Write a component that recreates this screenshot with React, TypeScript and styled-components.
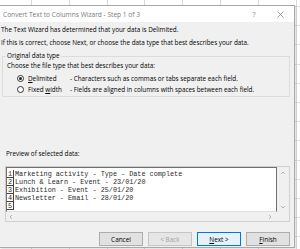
import React, { FC } from "react";
import styled, { createGlobalStyle } from "styled-components";

const GlobalStyle = createGlobalStyle`
  html, body { margin: 0; padding: 0; }
  body { font-family: "Open Sans", "Noto Sans", sans-serif; }
`;

const Screen = styled.div`
  width: 300px;
  height: 249px;
  overflow: hidden;
  background-color: #fff;
  background-image:
    repeating-linear-gradient(90deg, transparent 0 31px, #d9d9d9 31px 32px, transparent 32px 37.8px),
    repeating-linear-gradient(180deg, transparent 0 6px, #dedede 6px 7px, transparent 7px 19.2px);
  padding-top: 5px;
  box-sizing: border-box;
`;

const Dialog = styled.div`
  width: 295px;
  height: 243px;
  box-sizing: border-box;
  background: #f0f0f0;
  border: 1px solid #a9a9a9;
  border-left: none;
  display: flex;
  flex-direction: column;
  box-shadow: 1px 1px 2px rgba(0, 0, 0, 0.15);
`;

const TitleBar = styled.div`
  height: 16px;
  background: #fff;
  display: flex;
  align-items: center;
  padding: 0 1px 0 3px;
  font-size: 6.6px;
  color: #7a7a7a;
`;

const Title = styled.div`
  flex: 1;
`;

const TitleButton = styled.div`
  width: 26px;
  display: flex;
  justify-content: center;
  align-items: center;
  color: #8a8a8a;
  font-size: 7px;
`;

const Body = styled.div`
  flex: 1;
  display: flex;
  flex-direction: column;
  padding: 0 4px 0 1px;
  font-size: 6.35px;
  color: #000;
`;

const Line = styled.div<{ $top?: number; $indent?: number }>`
  height: 10px;
  line-height: 10px;
  margin-top: ${(p) => p.$top ?? 0}px;
  padding-left: ${(p) => p.$indent ?? 0}px;
  white-space: nowrap;
`;

const GroupBox = styled.fieldset`
  margin: 3px 0 0 1px;
  padding: 0 0 1px 4px;
  border: 1px solid #dcdcdc;
  border-radius: 0;
  min-width: 0;
`;

const Legend = styled.legend`
  padding: 0 1px;
  margin-left: -1px;
  line-height: 10px;
  height: 10px;
`;

const RadioRow = styled.label<{ $top?: number }>`
  display: flex;
  align-items: center;
  height: 11px;
  margin-top: ${(p) => p.$top ?? 0}px;
  white-space: nowrap;
`;

const Radio = styled.span<{ $checked?: boolean }>`
  width: 7px;
  height: 7px;
  box-sizing: border-box;
  border-radius: 50%;
  border: 1px solid #333;
  background: #fff;
  margin: 0 4px 0 10px;
  display: flex;
  align-items: center;
  justify-content: center;
  &::after {
    content: "";
    width: 3px;
    height: 3px;
    border-radius: 50%;
    background: ${(p) => (p.$checked ? "#222" : "transparent")};
  }
`;

const RadioLabel = styled.span`
  width: 42px;
  u { text-decoration: underline; }
`;

const PreviewFrame = styled.div`
  margin: 7px 0 0 4px;
  height: 56px;
  box-sizing: border-box;
  border: 1px solid #d0d0d0;
  display: grid;
  grid-template-columns: 1fr 12px;
  grid-template-rows: 1fr 9px;
`;

const TextArea = styled.div`
  background: #fff;
  border-top: 1px solid #6e6e6e;
  border-left: 1px solid #6e6e6e;
  border-right: 1px solid #6e6e6e;
  border-bottom: 1px solid #e0e0e0;
  overflow: hidden;
  padding-top: 2px;
  font-family: "Liberation Mono", monospace;
  font-size: 6.8px;
  color: #2b2b2b;
`;

const PreviewRow = styled.div`
  display: flex;
  height: 8px;
  line-height: 8px;
  white-space: nowrap;
`;

const RowNum = styled.span`
  width: 7px;
  box-sizing: border-box;
  border-right: 1px solid #444;
  border-bottom: 1px solid #444;
  padding-left: 1px;
  margin-right: 1px;
`;

const ScrollCell = styled.div<{ $dir: "col" | "row" }>`
  display: flex;
  flex-direction: ${(p) => (p.$dir === "col" ? "column" : "row")};
  justify-content: space-between;
  align-items: center;
  padding: ${(p) => (p.$dir === "col" ? "3px 0 2px" : "0 4px 0 2px")};
`;

const ButtonRow = styled.div`
  display: flex;
  justify-content: flex-end;
  gap: 5px;
  margin-top: 10px;
`;

const Button = styled.div<{ $variant?: "default" | "disabled" | "focus" }>`
  width: 44px;
  height: 14px;
  box-sizing: border-box;
  display: flex;
  align-items: center;
  justify-content: center;
  font-size: 6.4px;
  background: ${(p) =>
    p.$variant === "focus" ? "#e5f1fb" : p.$variant === "disabled" ? "#e6e6e6" : "#e1e1e1"};
  border: 1px solid
    ${(p) =>
      p.$variant === "focus" ? "#0078d7" : p.$variant === "disabled" ? "#c6c6c6" : "#adadad"};
  color: ${(p) => (p.$variant === "disabled" ? "#a3a3a3" : "#000")};
`;

const Chevron: FC<{ dir: "up" | "down" | "left" | "right" }> = ({ dir }) => {
  const pts = {
    up: "1,4 3,2 5,4",
    down: "1,2 3,4 5,2",
    left: "4,1 2,3 4,5",
    right: "2,1 4,3 2,5",
  }[dir];
  return (
    <svg width="6" height="6" viewBox="0 0 6 6">
      <polyline points={pts} fill="none" stroke="#a6a6a6" strokeWidth="0.8" />
    </svg>
  );
};

const rows = [
  "Marketing activity - Type - Date complete",
  "Lunch & Learn - Event - 23/01/20",
  "Exhibition - Event - 25/01/20",
  "Newsletter - Email - 28/01/20",
  "",
];

const App: FC = () => {
  return (
    <Screen>
      <GlobalStyle />
      <Dialog>
        <TitleBar>
          <Title>Convert Text to Columns Wizard - Step 1 of 3</Title>
          <TitleButton>?</TitleButton>
          <TitleButton>
            <svg width="7" height="7" viewBox="0 0 7 7">
              <path d="M0.5 0.5 L6.5 6.5 M6.5 0.5 L0.5 6.5" stroke="#8a8a8a" strokeWidth="0.8" />
            </svg>
          </TitleButton>
        </TitleBar>
        <Body>
          <Line $top={3}>The Text Wizard has determined that your data is Delimited.</Line>
          <Line $top={3}>
            If this is correct, choose Next, or choose the data type that best describes your data.
          </Line>
          <GroupBox>
            <Legend>Original data type</Legend>
            <Line>Choose the file type that best describes your data:</Line>
            <RadioRow $top={2}>
              <Radio $checked />
              <RadioLabel>
                <u>D</u>elimited
              </RadioLabel>
              <span>- Characters such as commas or tabs separate each field.</span>
            </RadioRow>
            <RadioRow>
              <Radio />
              <RadioLabel>
                Fixed <u>w</u>idth
              </RadioLabel>
              <span>- Fields are aligned in columns with spaces between each field.</span>
            </RadioRow>
          </GroupBox>
          <Line $top={52} $indent={5}>
            Preview of selected data:
          </Line>
          <PreviewFrame>
            <TextArea>
              {rows.map((text, i) => (
                <PreviewRow key={i}>
                  <RowNum>{i + 1}</RowNum>
                  {text}
                </PreviewRow>
              ))}
            </TextArea>
            <ScrollCell $dir="col">
              <Chevron dir="up" />
              <Chevron dir="down" />
            </ScrollCell>
            <ScrollCell $dir="row">
              <Chevron dir="left" />
              <Chevron dir="right" />
            </ScrollCell>
            <div />
          </PreviewFrame>
          <ButtonRow>
            <Button>Cancel</Button>
            <Button $variant="disabled">&lt; Back</Button>
            <Button $variant="focus">
              <span>
                <u>N</u>ext &gt;
              </span>
            </Button>
            <Button>
              <span>
                <u>F</u>inish
              </span>
            </Button>
          </ButtonRow>
        </Body>
      </Dialog>
    </Screen>
  );
};

export default App;
